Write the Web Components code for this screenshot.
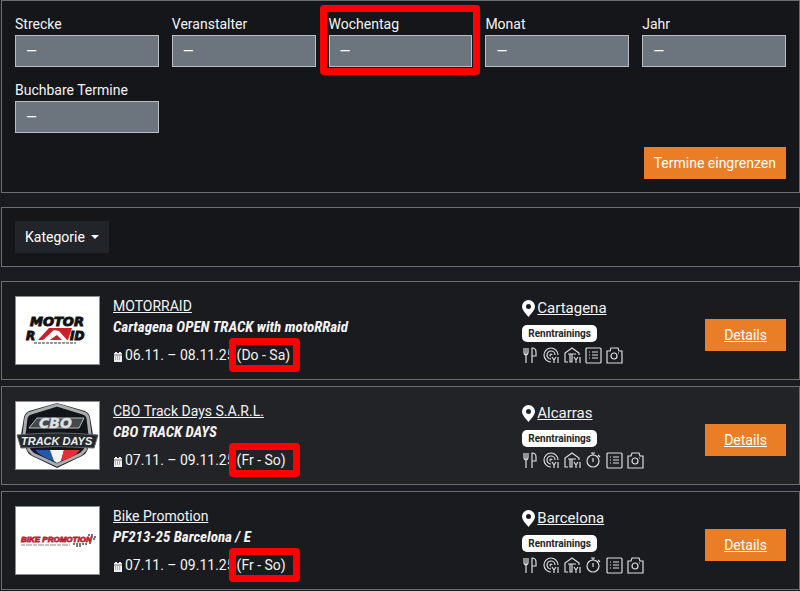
<!DOCTYPE html>
<html lang="de">
<head>
<meta charset="UTF-8">
<meta name="viewport" content="width=device-width, initial-scale=1.0">
<title>Termine</title>
<style>
    body {
        margin: 0 0 0 1px;
        background: #1b1c21;
        color: #f4f4f4;
        font-family: Roboto, "Liberation Sans", sans-serif;
        font-size: 14px;
        line-height: 20px;
    }
</style>
</head>
<body>
<event-page>
    <filter-panel slot="filter">
        <filter-field label="Strecke"></filter-field>
        <filter-field label="Veranstalter"></filter-field>
        <filter-field label="Wochentag" marked></filter-field>
        <filter-field label="Monat"></filter-field>
        <filter-field label="Jahr"></filter-field>
        <filter-field label="Buchbare Termine"></filter-field>
    </filter-panel>
    <category-bar slot="category">Kategorie</category-bar>

    <event-card organizer="MOTORRAID" date="06.11. – 08.11.25" days="(Do - Sa)" place="Cartagena" features="food tyre box list camera">
        <svg slot="logo" viewBox="1 1 83 67" role="img" aria-label="Motor Raid">
            <g font-family="DejaVu Sans" font-weight="bold" font-style="italic" fill="#111" stroke="#111" stroke-width="1">
                <text x="15" y="30" font-size="13">MOTOR</text>
                <text x="11" y="44" font-size="12">R</text>
                <text x="55" y="44" font-size="12">ID</text>
            </g>
            <path d="M23 44 34 32H57L53 44Z" fill="#c9202c"/>
            <path d="M28 44 39 34 44 35 52 44H47L42 39 35 44Z" fill="#fff"/>
            <path d="M35 44 41 40 46 44Z" fill="#c9202c"/>
            <path d="M19 47H61" stroke="#333" stroke-width="1" stroke-dasharray="3 1"/>
        </svg>
        Cartagena OPEN TRACK with motoRRaid
    </event-card>

    <event-card alt organizer="CBO Track Days S.A.R.L." date="07.11. – 09.11.25" days="(Fr - So)" place="Alcarras" features="food tyre box timer list camera">
        <svg slot="logo" viewBox="1 1 83 67" role="img" aria-label="CBO Track Days">
            <path d="M42 2 70 10Q74 12 75 16L78 34 72 50Q71 53 67 55L42 67 17 55Q13 53 12 50L6 34 9 16Q10 12 14 10Z" fill="#24272b"/>
            <path d="M42 4 68 12Q72 13 73 17L75 34 70 49 66 53 42 64 18 53 14 49 9 34 11 17Q12 13 16 12Z" fill="#111519" stroke="#a9adb0" stroke-width="3"/>
            <path d="M20 49H36L39 60Q26 56 20 49Z" fill="#2459a8"/>
            <path d="M35 49H49L46 60 42 62 39 60Z" fill="#f4f4f4"/>
            <path d="M49 49H65Q59 57 46 60Z" fill="#e22f34"/>
            <path d="M22 17H69L64 27H14Z" fill="#43484d" stroke="#b9bdc0" stroke-width="1"/>
            <text x="24" y="27" font-family="DejaVu Sans" font-weight="bold" font-style="italic" font-size="14" fill="#dfe2e4" stroke="#dfe2e4" stroke-width=".4">CBO</text>
            <path d="M2 34Q42 30 83 34L79 47Q42 44 6 47Z" fill="#25292d" stroke="#5d6266" stroke-width="1"/>
            <text x="6" y="44" font-family="Liberation Sans" font-weight="bold" font-style="italic" font-size="11" fill="#f0f0f0">TRACK DAYS</text>
        </svg>
        CBO TRACK DAYS
    </event-card>

    <event-card organizer="Bike Promotion" date="07.11. – 09.11.25" days="(Fr - So)" place="Barcelona" features="food tyre box timer list camera">
        <svg slot="logo" viewBox="1 1 83 67" role="img" aria-label="Bike Promotion">
            <path d="M58 38H72M61 40H66M73 29H78M76 31H81M78 33H80M74 37H77" stroke="#777" stroke-width="2" stroke-dasharray="2 1"/>
            <text x="6" y="36" font-family="Liberation Sans" font-weight="bold" font-style="italic" font-size="8" fill="#c01f36" stroke="#c01f36" stroke-width=".8">BIKE PROMOTION</text>
            <path d="M6 39H55" stroke="#888" stroke-width="1" stroke-dasharray="4 1 6 1"/>
        </svg>
        PF213-25 Barcelona / E
    </event-card>
</event-page>

<script>
const icons = {
    food: '<path d="M2 1v4q0 3 2 3t2-3V1M4 1v15M10 16V1q4 0 4 4v4h-4"/>',
    tyre: '<path d="M8 15A7 7 0 1 1 15 8M8 12a4 4 0 1 1 4-4M8 9a1 1 0 1 1 1-1M9 10l2 3 2-3M11 13v3M15 10v6"/>',
    box: '<path d="M4 15H1V6l7-5 7 5v2M4 7h8M6 7v8h2V7M10 10l2 3 2-3M12 13v3M16 10v6"/>',
    timer: '<circle cx="8" cy="9" r="6"/><path d="M6 1h4M8 1v2M8 6v4M13 3l2 2"/>',
    list: '<rect x="1" y="1" width="15" height="15" rx="1"/><path d="M4 5h1M7 5h6M4 8h1M7 8h6M4 11h1M7 11h6"/>',
    camera: '<path d="M1 4h3l1-3h7l1 3h3v12H1z"/><circle cx="8" cy="9" r="3"/><path d="M12 6h1"/>'
};

class EventPage extends HTMLElement {
    constructor() {
        super();
        this.attachShadow({ mode: 'open' });
        this.shadowRoot.innerHTML = `
            <style>
                :host { display: block; }
                main { display: flex; flex-direction: column; gap: 14px; }
                .list { display: flex; flex-direction: column; gap: 6px; }
            </style>
            <main>
                <slot name="filter"></slot>
                <slot name="category"></slot>
                <div class="list"><slot></slot></div>
            </main>
        `;
    }
}

class FilterPanel extends HTMLElement {
    constructor() {
        super();
        this.attachShadow({ mode: 'open' });
        this.shadowRoot.innerHTML = `
            <style>
                :host { display: block; border: 1px solid #6b6d70; background: #151619; padding: 13px; }
                .fields { display: grid; grid-template-columns: repeat(5, 1fr); gap: 13px; }
                .actions { display: flex; justify-content: flex-end; margin-top: 14px; }
                button {
                    height: 32px;
                    padding: 0 10px;
                    border: 0;
                    background: #e97e27;
                    color: #fff;
                    font: inherit;
                }
            </style>
            <form>
                <div class="fields"><slot></slot></div>
                <div class="actions"><button type="button">Termine eingrenzen</button></div>
            </form>
        `;
    }
}

class FilterField extends HTMLElement {
    constructor() {
        super();
        this.attachShadow({ mode: 'open' });
        this.shadowRoot.innerHTML = `
            <style>
                :host { display: block; position: relative; }
                label { display: block; height: 21px; }
                select {
                    display: block;
                    box-sizing: border-box;
                    width: 100%;
                    height: 32px;
                    padding: 0 10px;
                    border: 1px solid #b9bec2;
                    border-radius: 0;
                    background: #6c757d;
                    color: #fff;
                    font: inherit;
                    appearance: none;
                }
                :host([marked])::after {
                    content: "";
                    position: absolute;
                    inset: -9px -8px -8px -9px;
                    border: 7px solid #f00;
                    border-radius: 4px;
                    pointer-events: none;
                }
            </style>
            <label for="field">${this.getAttribute('label')}</label>
            <select id="field"><option>—</option></select>
        `;
    }
}

class CategoryBar extends HTMLElement {
    constructor() {
        super();
        this.attachShadow({ mode: 'open' });
        this.shadowRoot.innerHTML = `
            <style>
                :host { display: block; border: 1px solid #6b6d70; background: #151619; padding: 13px; }
                button {
                    display: flex;
                    align-items: center;
                    gap: 6px;
                    height: 32px;
                    padding: 0 10px;
                    border: 0;
                    background: #212529;
                    color: #fff;
                    font: inherit;
                }
                .caret { border: 4px solid transparent; border-top-color: #fff; border-bottom: 0; }
            </style>
            <button type="button"><slot></slot><span class="caret"></span></button>
        `;
    }
}

class FeatureIcon extends HTMLElement {
    constructor() {
        super();
        this.attachShadow({ mode: 'open' });
    }

    connectedCallback() {
        this.shadowRoot.innerHTML = `
            <style>
                :host { display: block; width: 17px; height: 17px; }
                svg { display: block; width: 100%; height: 100%; fill: none; stroke: #ddd; stroke-width: 1.2; }
            </style>
            <svg viewBox="0 0 17 17" aria-hidden="true">${icons[this.getAttribute('name')]}</svg>
        `;
    }
}

class EventCard extends HTMLElement {
    constructor() {
        super();
        this.attachShadow({ mode: 'open' });
        const features = this.getAttribute('features').split(' ')
            .map(name => `<feature-icon name="${name}"></feature-icon>`).join('');
        this.shadowRoot.innerHTML = `
            <style>
                :host {
                    display: grid;
                    grid-template-columns: 85px 7fr 3fr auto;
                    gap: 13px;
                    padding: 14px 13px;
                    border: 1px solid #6b6d70;
                    background: #1a1b1f;
                }
                :host([alt]) { background: #222327; }
                a { color: inherit; }
                .logo { box-sizing: border-box; height: 69px; border: 1px solid #8a8c8f; background: #fff; }
                ::slotted(svg) { display: block; width: 100%; height: 100%; }
                h2 {
                    margin: 0;
                    font-family: "Roboto Condensed", "Liberation Sans Narrow", Roboto, sans-serif;
                    font-size: 15px;
                    font-weight: bold;
                    font-style: italic;
                    line-height: 22px;
                }
                .date { display: flex; align-items: center; gap: 2px; margin-top: 7px; }
                .date svg { width: 10px; height: 10px; margin-top: 3px; }
                .days { position: relative; }
                .days::after {
                    content: "";
                    position: absolute;
                    top: -7px;
                    left: -8px;
                    box-sizing: border-box;
                    width: 71px;
                    height: 34px;
                    border: 7px solid #f00;
                    border-radius: 4px;
                }
                .place { display: flex; align-items: center; gap: 2px; margin: 2px 0 7px; font-size: 15px; }
                .place svg { width: 13px; height: 17px; }
                .badge {
                    display: inline-block;
                    padding: 0 6px;
                    border-radius: 5px;
                    background: #fff;
                    color: #212529;
                    font-size: 10px;
                    font-weight: bold;
                    line-height: 17px;
                    vertical-align: top;
                }
                .features { display: flex; gap: 4px; margin-top: 2px; }
                .details {
                    align-self: start;
                    margin-top: 23px;
                    padding: 6px 19px;
                    background: #e97e27;
                    color: #fff;
                }
            </style>
            <div class="logo"><slot name="logo"></slot></div>
            <div>
                <a href="#">${this.getAttribute('organizer')}</a>
                <h2><slot></slot></h2>
                <div class="date">
                    <svg viewBox="0 0 10 10" aria-hidden="true"><path d="M1 1h1V0h2v1h2V0h2v1h1v9H1z" fill="#eee"/><path d="M1 3h8" stroke="#222" stroke-width=".6"/><path d="M2 5h6M2 7h6" stroke="#555" stroke-width=".8" stroke-dasharray="1 1"/></svg>
                    <span>${this.getAttribute('date')}</span>
                    <span class="days">${this.getAttribute('days')}</span>
                </div>
            </div>
            <div>
                <div class="place">
                    <svg viewBox="0 0 26 34" aria-hidden="true"><path fill="#fff" fill-rule="evenodd" d="M13 0A13 13 0 0 1 26 13C26 20 18 28 13 34 8 28 0 20 0 13A13 13 0 0 1 13 0ZM13 8a5 5 0 1 0 0 10 5 5 0 0 0 0-10Z"/></svg>
                    <a href="#">${this.getAttribute('place')}</a>
                </div>
                <span class="badge">Renntrainings</span>
                <div class="features">${features}</div>
            </div>
            <a class="details" href="#">Details</a>
        `;
    }
}

customElements.define('event-page', EventPage);
customElements.define('filter-panel', FilterPanel);
customElements.define('filter-field', FilterField);
customElements.define('category-bar', CategoryBar);
customElements.define('feature-icon', FeatureIcon);
customElements.define('event-card', EventCard);
</script>
</body>
</html>
